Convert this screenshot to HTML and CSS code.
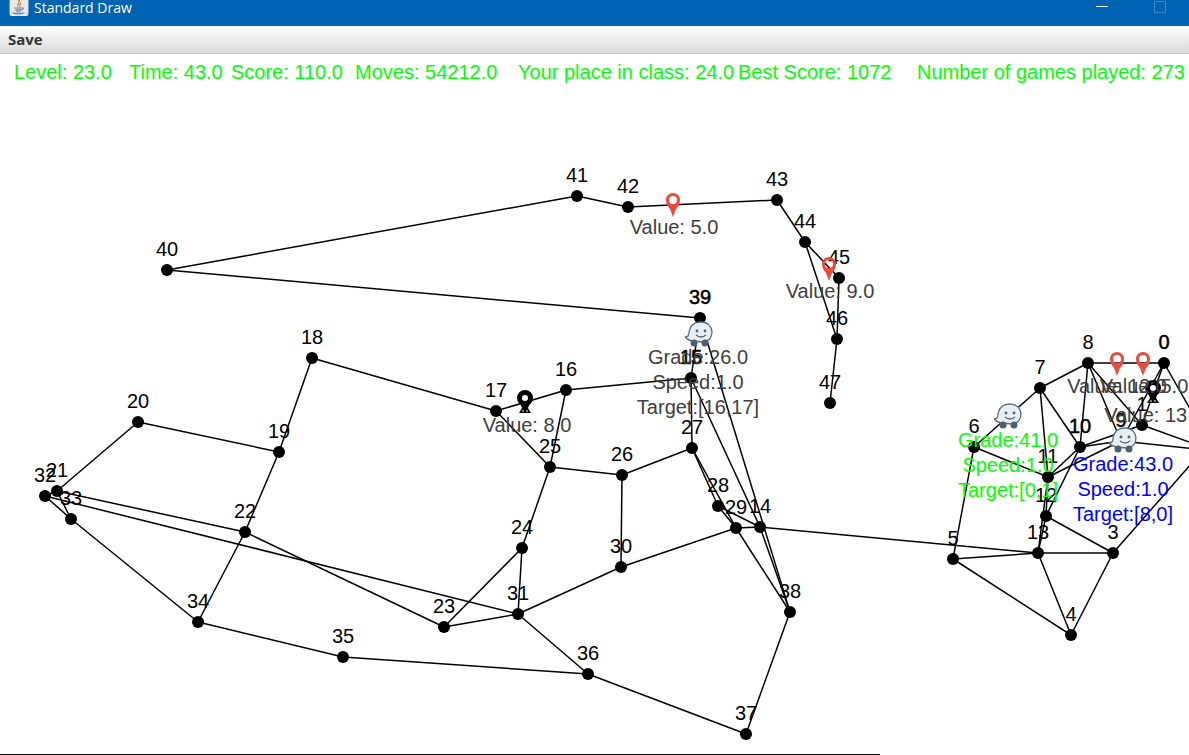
FILE: index.html
```
<!DOCTYPE html>
<html lang="en">
<head>
<meta charset="utf-8">
<title>Standard Draw</title>
<link rel="stylesheet" href="styles.css">
</head>
<body>
<header class="titlebar">
  <svg class="logo" viewBox="0 0 20 17" aria-hidden="true">
    <path d="M0 0H20V15Q20 17 18 17H2Q0 17 0 15Z" fill="#e9e9e9"/>
    <path d="M1 14H19" stroke="#cfcfcf"/>
    <path d="M9 7C7 5 11 4 10 0M11 7C10 5 12 5 12 3" fill="none" stroke="#e8833a" stroke-width="1.500"/>
    <path d="M5 8.500H13M6 10.500H12.500M7 12.500H12M13 8.500Q16 8 13 11M3.500 13.500Q9 16 15 13.500" fill="none" stroke="#5b7f9f" stroke-width="1.200"/>
  </svg>
  <h1 class="title">Standard Draw</h1>
  <div class="window-controls">
    <button class="control" aria-label="Minimize"><span class="minimize"></span></button>
    <button class="control" aria-label="Maximize" disabled><span class="maximize"></span></button>
  </div>
</header>
<nav class="menubar"><button class="menu">Save</button></nav>
<main class="board">
  <div class="stats">
    <span>Level: 23.0</span>
    <span>Time: 43.0</span>
    <span>Score: 110.0</span>
    <span>Moves: 54212.0</span>
    <span>Your place in class: 24.0</span>
    <span>Best Score: 1072</span>
    <span>Number of games played: 273</span>
  </div>
  <svg class="graph" id="graph" viewBox="0 90 1189 664" role="img" aria-label="Game graph">
    <defs>
      <g id="pin">
        <path fill-rule="evenodd" d="M0 13L-3 5C-5 3-7 0-7-4C-7-8-4-11 0-11C4-11 7-8 7-4C7 0 5 3 3 5ZM0-8A4 4 0 1 0 0 0A4 4 0 1 0 0-8Z"/>
      </g>
      <g id="pin-dark">
        <path d="M-5 2H5L3 7L6 12H-6L-3 7Z"/>
        <circle cy="-3" r="5.500" fill="#fff" stroke="#000" stroke-width="5"/>
        <path d="M-3 10H-1M1 10H3" stroke="#fff" stroke-width="1"/>
      </g>
      <g id="car">
        <path d="M-8 7C-11 6-14 5-14.500 3C-12 3-11 1-11-2C-10-8-6-12 1-12C8-12 12-7 12-2C12 4 8 8 3 8Z" fill="#e8eef2" stroke="#5c6e79" stroke-width="1.300"/>
        <g fill="#4b6172"><circle cx="-6" cy="9" r="3.500"/><circle cx="5" cy="9" r="3.500"/><circle cx="-3" cy="-3" r="1.400"/><circle cx="5" cy="-3" r="1.400"/></g>
        <path d="M-4 1Q1 5 6 1" fill="none" stroke="#4b6172" stroke-width="1.300"/>
      </g>
    </defs>
    <g id="edges" class="edges"></g>
    <g id="nodes"></g>
    <g id="labels" class="labels"></g>
    <g class="fruit">
      <use href="#pin" x="673" y="204"/><use href="#pin" x="829" y="268"/>
      <use href="#pin" x="1117" y="363"/><use href="#pin" x="1143" y="363"/>
    </g>
    <use href="#pin-dark" x="525" y="401"/><use href="#pin-dark" x="1153" y="391"/>
    <g class="labels value">
      <text x="674" y="234">Value: 5.0</text>
      <text x="830" y="298">Value: 9.0</text>
      <text x="527" y="432">Value: 8.0</text>
      <text x="1117" y="393">Value: 12.0</text>
      <text x="1144" y="393">Value: 5.0</text>
      <text x="1154" y="422">Value: 13.0</text>
    </g>
    <use href="#car" x="700" y="334"/><use href="#car" x="1009" y="416"/><use href="#car" x="1124" y="440"/>
    <g class="labels value"><text x="698" y="364">Grade:26.0</text><text x="698" y="389">Speed:1.0</text><text x="698" y="414">Target:[16,17]</text></g>
    <g class="labels green"><text x="1008" y="447">Grade:41.0</text><text x="1008" y="472">Speed:1.0</text><text x="1008" y="497">Target:[0,1]</text></g>
    <g class="labels blue"><text x="1123" y="471">Grade:43.0</text><text x="1123" y="496">Speed:1.0</text><text x="1123" y="521">Target:[8,0]</text></g>
  </svg>
</main>
<div class="edge-line"></div>
<script src="graph.js"></script>
</body>
</html>
```
FILE: styles.css
```
* { box-sizing: border-box; }
body {
  margin: 0;
  min-height: 100vh;
  display: flex;
  flex-direction: column;
  overflow: hidden;
  background: #fff;
  font-family: "Liberation Sans", Arial, sans-serif;
}
button { border: 0; padding: 0; background: none; font: inherit; color: inherit; }
.titlebar {
  display: flex;
  align-items: flex-start;
  height: 26px;
  padding-left: 9px;
  gap: 5px;
  background: #0063b1;
  color: #fff;
}
.logo { width: 20px; height: 16px; }
.title {
  margin: 0;
  font: 400 14px/16px "Open Sans", "Noto Sans", sans-serif;
}
.window-controls { display: flex; gap: 46px; margin-left: auto; padding-right: 23px; }
.control { display: flex; width: 12px; height: 14px; }
.minimize { width: 12px; height: 1px; margin-top: 6px; background: #fff; }
.maximize { width: 12px; height: 12px; margin-top: 1px; border: 1px solid #3986c4; }
.menubar {
  height: 28px;
  padding: 0 8px;
  border-bottom: 1px solid #c4c4c4;
  background: linear-gradient(#fff, #dadada);
}
.menu { font: 700 15px/26px "Open Sans", "Noto Sans", sans-serif; color: #333; }
.board { flex: 1; }
.stats {
  display: grid;
  grid-template-columns: 115fr 102fr 124fr 163fr 220fr 179fr 272fr;
  padding-left: 14px;
  line-height: 36px;
  font-size: 20px;
  white-space: nowrap;
  color: #0f0;
}
.graph { display: block; width: 100%; }
.edges { stroke: #000; stroke-width: 1.5; }
.labels { font-size: 20px; text-anchor: middle; }
.doubled { stroke: #000; stroke-width: 0.5; }
.value { fill: #404040; }
.green { fill: #0f0; }
.blue { fill: #00f; }
.fruit { fill: #e74c3c; }
.edge-line { width: 74%; height: 1px; background: #111; }
```
FILE: graph.js
```
const nodes = {
  0: [1164, 363], 1: [1142, 425], 2: [1214, 451], 3: [1113, 553], 4: [1071, 635],
  5: [953, 559], 6: [974, 447], 7: [1040, 388], 8: [1088, 363], 9: [1121, 441],
  10: [1080, 447], 11: [1048, 477], 12: [1046, 516], 13: [1038, 553], 14: [760, 527],
  15: [691, 378], 16: [566, 390], 17: [496, 411], 18: [312, 358], 19: [279, 452],
  20: [138, 422], 21: [57, 491], 22: [245, 532], 23: [444, 627], 24: [522, 548],
  25: [550, 467], 26: [622, 475], 27: [692, 448], 28: [718, 506], 29: [736, 528],
  30: [621, 567], 31: [518, 614], 32: [45, 496], 33: [71, 519], 34: [198, 622],
  35: [343, 657], 36: [588, 674], 37: [746, 734], 38: [790, 612], 39: [700, 318],
  40: [167, 270], 41: [577, 196], 42: [628, 207], 43: [777, 200], 44: [805, 242],
  45: [839, 278], 46: [837, 339], 47: [830, 403]
};
const edges = `0-8 0-1 0-9 0-2 1-2 9-2 10-1 10-9 11-9 11-10 12-10 11-12 11-13 12-13 12-3
13-3 13-4 3-4 5-4 5-13 14-13 3-2 8-9 8-1 8-10 8-7 7-10 7-11 7-6 6-11 6-5
40-41 41-42 42-43 43-44 44-45 44-46 45-46 46-47 40-39 39-15 39-38 15-14 15-27
14-38 27-28 27-29 28-29 28-14 29-14 29-38 29-30 15-16 16-17 16-25 17-25 25-26
26-27 26-30 25-24 24-31 24-23 23-31 31-30 31-36 36-37 37-38 36-35 35-34 34-33
34-22 22-21 22-23 22-19 19-18 18-17 19-20 20-21 21-33 21-32 32-33 32-31`.split(/\s+/);
const doubled = ["0", "9", "10", "15", "39"];

function add(parent, tag, attributes, text) {
  const element = document.createElementNS("http://www.w3.org/2000/svg", tag);
  for (const name in attributes) element.setAttribute(name, attributes[name]);
  if (text) element.textContent = text;
  document.getElementById(parent).append(element);
}

for (const edge of edges) {
  const [a, b] = edge.split("-").map(id => nodes[id]);
  // Node 2 lies past the right border; its road to node 3 leaves more steeply.
  const end = edge === "3-2" ? [1213, 439] : b;
  add("edges", "line", { x1: a[0], y1: a[1], x2: end[0], y2: end[1] });
}
for (const id in nodes) {
  if (id === "2") continue;
  const [x, y] = nodes[id];
  add("nodes", "circle", { cx: x, cy: y, r: 6 });
  add("labels", "text", { x: x, y: y - 14, class: doubled.includes(id) ? "doubled" : "node" }, id);
}
```
